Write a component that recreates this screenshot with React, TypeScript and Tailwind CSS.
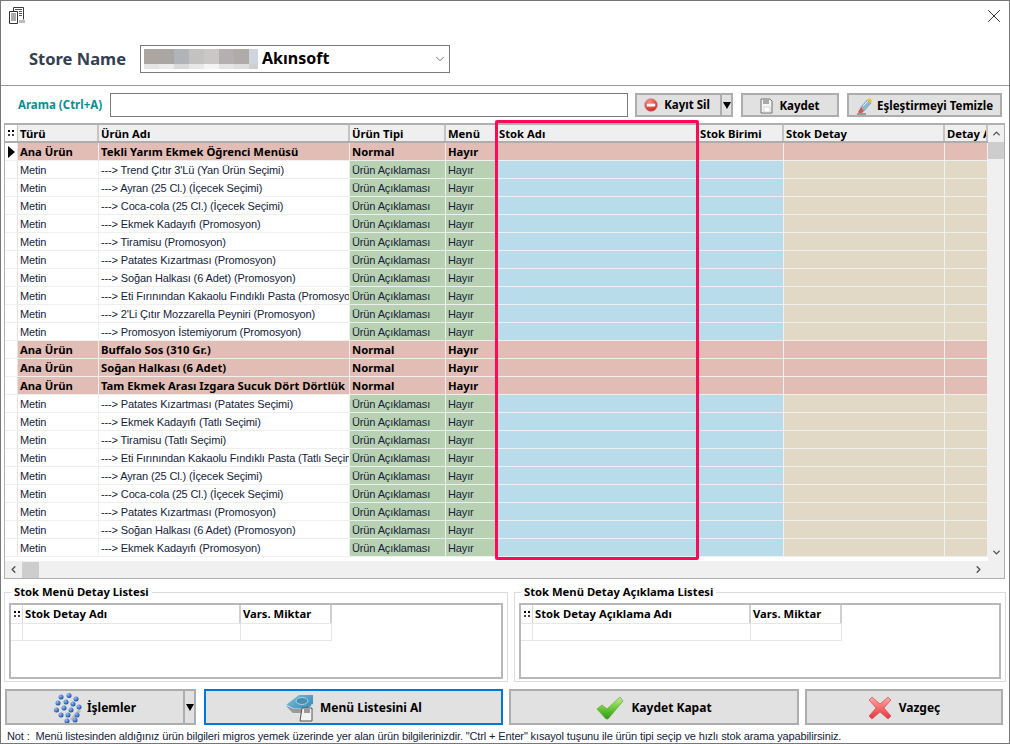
import { ChevronDown, ChevronLeft, ChevronRight, ChevronUp, X } from "lucide-react";

const FONT = "[font-family:'Noto_Sans','DejaVu_Sans',sans-serif]";
const REGULAR = "[font-family:'Liberation_Sans',sans-serif] text-[11px] tracking-[-0.13px] text-[#14233a]";

type Row = { type: string; name: string; kind: string; menu: string };

const main = (name: string): Row => ({ type: "Ana Ürün", name, kind: "Normal", menu: "Hayır" });
const sub = (name: string): Row => ({ type: "Metin", name: "---> " + name, kind: "Ürün Açıklaması", menu: "Hayır" });

const rows: Row[] = [
  main("Tekli Yarım Ekmek Öğrenci Menüsü"),
  sub("Trend Çıtır 3'Lü (Yan Ürün Seçimi)"),
  sub("Ayran (25 Cl.) (İçecek Seçimi)"),
  sub("Coca-cola (25 Cl.) (İçecek Seçimi)"),
  sub("Ekmek Kadayıfı (Promosyon)"),
  sub("Tiramisu (Promosyon)"),
  sub("Patates Kızartması (Promosyon)"),
  sub("Soğan Halkası (6 Adet) (Promosyon)"),
  sub("Eti Fırınından Kakaolu Fındıklı Pasta (Promosyon)"),
  sub("2'Li Çıtır Mozzarella Peyniri (Promosyon)"),
  sub("Promosyon İstemiyorum (Promosyon)"),
  main("Buffalo Sos (310 Gr.)"),
  main("Soğan Halkası (6 Adet)"),
  main("Tam Ekmek Arası Izgara Sucuk Dört Dörtlük"),
  sub("Patates Kızartması (Patates Seçimi)"),
  sub("Ekmek Kadayıfı (Tatlı Seçimi)"),
  sub("Tiramisu (Tatlı Seçimi)"),
  sub("Eti Fırınından Kakaolu Fındıklı Pasta (Tatlı Seçimi)"),
  sub("Ayran (25 Cl.) (İçecek Seçimi)"),
  sub("Coca-cola (25 Cl.) (İçecek Seçimi)"),
  sub("Patates Kızartması (Promosyon)"),
  sub("Soğan Halkası (6 Adet) (Promosyon)"),
  sub("Ekmek Kadayıfı (Promosyon)"),
];

const blur = [
  ["#aba6a2", "#e5e5e5", "w-[15px]"],
  ["#aaa6a3", "#ebebeb", "w-[15px]"],
  ["#b0b3b7", "#d9d9d9", "w-[15px]"],
  ["#c2c2c2", "#e8e8e8", "w-[15px]"],
  ["#c9c8c6", "#f4f4f4", "w-[15px]"],
  ["#b4b0b1", "#e4e4e4", "w-[15px]"],
  ["#b0aba8", "#dedede", "w-[15px]"],
  ["#ced5de", "#cfcfcf", "w-[9px]"],
];

const Grip = () => (
  <div className="grid h-[6px] w-[6px] grid-cols-2 gap-[2px]">
    <span className="h-[2px] w-[2px] bg-black" />
    <span className="h-[2px] w-[2px] bg-black" />
    <span className="h-[2px] w-[2px] bg-[#444]" />
    <span className="h-[2px] w-[2px] bg-[#444]" />
  </div>
);

const Head = ({ w, label }: { w: string; label: string }) => (
  <div className={`${w} flex h-full shrink-0 items-center overflow-hidden whitespace-nowrap border-r-2 border-[#c4c4c4] pl-[2px] pt-[2px] text-[11.25px] font-bold text-black`}>
    {label}
  </div>
);

const Cell = ({ w, bg, bold, text }: { w: string; bg: string; bold?: boolean; text?: string }) => (
  <div className={`${w} ${bg} ${bold ? "text-[11.25px] font-bold text-black" : REGULAR} flex h-full shrink-0 items-center overflow-hidden whitespace-nowrap border-r border-[#f0f0f0] pl-[2px] pt-[1px]`}>
    {text}
  </div>
);

const MainGrid = () => (
  <div className="relative ml-[3px] mt-[6px] flex h-[456px] w-[1001px] flex-col border border-t-2 border-[#b0b0b0] bg-white">
    <div className="flex min-h-0 flex-1">
      <div className="w-[983px] shrink-0">
        <div className="flex h-[18px] border-b-2 border-[#adadad] bg-[#efefef]">
          <div className="flex h-full w-[13px] shrink-0 items-center justify-center border-r border-[#c4c4c4] bg-white">
            <Grip />
          </div>
          <Head w="w-[81px]" label="Türü" />
          <Head w="w-[251px]" label="Ürün Adı" />
          <Head w="w-[96px]" label="Ürün Tipi" />
          <Head w="w-[51px]" label="Menü" />
          <Head w="w-[201px]" label="Stok Adı" />
          <Head w="w-[86px]" label="Stok Birimi" />
          <Head w="w-[161px]" label="Stok Detay" />
          <Head w="w-[43px]" label="Detay Açıklama" />
        </div>
        {rows.map((r, i) => {
          const isMain = r.type === "Ana Ürün";
          return (
            <div key={i} className="flex h-[18px] border-b border-[#efefef]">
              <div className="flex h-full w-[13px] shrink-0 items-center justify-center border-r border-[#e4e4e4] bg-white">
                {i === 0 && <div className="h-0 w-0 border-y-[6px] border-l-[7px] border-y-transparent border-l-black" />}
              </div>
              <Cell w="w-[81px]" bg={isMain ? "bg-[#e2bdb5]" : "bg-white"} bold={isMain} text={r.type} />
              <Cell w="w-[251px]" bg={isMain ? "bg-[#e2bdb5]" : "bg-white"} bold={isMain} text={r.name} />
              <Cell w="w-[96px]" bg={isMain ? "bg-[#e2bdb5]" : "bg-[#b9d1b3]"} bold={isMain} text={r.kind} />
              <Cell w="w-[51px]" bg={isMain ? "bg-[#e2bdb5]" : "bg-[#b9d1b3]"} bold={isMain} text={r.menu} />
              <div className={`${isMain ? "bg-[#e2bdb5]" : "bg-[#b8dcea]"} h-full w-[287px] shrink-0 border-r border-[#f0f0f0]`} />
              <Cell w="w-[161px]" bg={isMain ? "bg-[#e2bdb5]" : "bg-[#e1d8c5]"} />
              <Cell w="w-[43px]" bg={isMain ? "bg-[#e2bdb5]" : "bg-[#e1d8c5]"} />
            </div>
          );
        })}
      </div>
      <div className="flex w-[16px] shrink-0 flex-col items-center bg-[#f0f0f0]">
        <div className="flex h-[17px] items-center justify-center">
          <ChevronUp size={11} strokeWidth={3} color="#505050" />
        </div>
        <div className="h-[17px] w-[16px] bg-[#cdcdcd]" />
        <div className="flex-1" />
        <div className="flex h-[17px] items-center justify-center">
          <ChevronDown size={11} strokeWidth={3} color="#505050" />
        </div>
      </div>
    </div>
    <div className="flex h-[17px] shrink-0 items-center bg-[#f0f0f0] pr-[17px]">
      <div className="flex h-full w-[17px] items-center justify-center">
        <ChevronLeft size={11} strokeWidth={3} color="#505050" />
      </div>
      <div className="h-[16px] w-[17px] bg-[#cdcdcd]" />
      <div className="flex-1" />
      <div className="flex h-full w-[17px] items-center justify-center">
        <ChevronRight size={11} strokeWidth={3} color="#505050" />
      </div>
    </div>
    <div className="absolute left-[490px] top-[-5px] h-[440px] w-[204px] rounded-[2px] border-[3.5px] border-[#ff0a5a]" />
  </div>
);

const DetailBox = ({ title, head, className }: { title: string; head: string; className: string }) => (
  <fieldset className={`${className} h-[97px] border border-[#dcdcdc] pl-[4px]`}>
    <legend className="ml-[2px] px-[3px] text-[11.25px] font-bold leading-[14px] text-black">{title}</legend>
    <div className="mt-[4px] h-[76px] w-[calc(100%-4px)] border-2 border-[#b8b8b8]">
      <div className="flex h-[18px] w-[321px]">
        <div className="flex w-[12px] items-center justify-center border-r border-[#d8d8d8]">
          <Grip />
        </div>
        <div className="flex w-[218px] items-center border-r-2 border-[#d0d0d0] pl-[2px] text-[11.25px] font-bold text-black">{head}</div>
        <div className="flex w-[91px] items-center border-r-2 border-[#d0d0d0] pl-[2px] text-[11.25px] font-bold text-black">Vars. Miktar</div>
      </div>
      <div className="flex h-[18px] w-[321px] border-y border-[#e6e6e6]">
        <div className="w-[12px] border-r border-[#e6e6e6]" />
        <div className="w-[218px] border-r border-[#e6e6e6]" />
        <div className="w-[91px] border-r border-[#e6e6e6]" />
      </div>
    </div>
  </fieldset>
);

const SplitArrow = () => <div className="h-0 w-0 border-x-[4px] border-t-[7px] border-x-transparent border-t-black" />;

const StopIcon = () => (
  <svg width="14" height="14" viewBox="0 0 14 14">
    <defs>
      <radialGradient id="st" cx="0.4" cy="0.25" r="0.9">
        <stop offset="0" stopColor="#ff8a7c" />
        <stop offset="1" stopColor="#c0151a" />
      </radialGradient>
    </defs>
    <circle cx="7" cy="7" r="6.5" fill="url(#st)" stroke="#b9b0b0" strokeWidth="0.6" />
    <rect x="2.8" y="5.7" width="8.4" height="2.8" fill="#fff" />
  </svg>
);

const SaveIcon = () => (
  <svg width="13" height="16" viewBox="0 0 13 16">
    <path d="M1 1h9l2 2v12H1z" fill="#f4f4f4" stroke="#6f6f6f" />
    <rect x="3" y="1" width="6" height="5" fill="#a9a9a9" />
    <rect x="4" y="9" width="6" height="5" fill="#fff" stroke="#bdbdbd" strokeWidth="0.6" />
  </svg>
);

const EraserIcon = () => (
  <svg width="18" height="18" viewBox="0 0 18 18">
    <path d="M1 17h9" stroke="#555" strokeWidth="1" />
    <path d="M2 15L5 10l3 4-2 2H3z" fill="#d45a52" />
    <path d="M5 10l6-7 4 3-7 8z" fill="#8fb9d6" stroke="#5d7f97" strokeWidth="0.5" />
    <path d="M11 3l3-2 2 3-1 2z" fill="#e8c62c" />
    <path d="M7 9l5-5" stroke="#eef5f9" strokeWidth="1" />
  </svg>
);

const DotsIcon = () => {
  const dots = [
    [6, 2], [14, 0.5], [21, 4], [3, 8], [11, 7], [18, 9], [1.5, 15], [9, 13], [16, 15], [24, 12], [6, 20], [13, 20], [22, 20], [12, 26], [20, 25],
  ];
  return (
    <svg width="28" height="30" viewBox="0 0 28 30">
      <defs>
        <radialGradient id="dt" cx="0.35" cy="0.3" r="0.8">
          <stop offset="0" stopColor="#8fc2f2" />
          <stop offset="1" stopColor="#123f9c" />
        </radialGradient>
      </defs>
      <path d="M17 27l9-10" stroke="#bdbdbd" strokeWidth="3" />
      {dots.map(([x, y], i) => (
        <circle key={i} cx={x + 1} cy={y + 2} r="2.5" fill="url(#dt)" />
      ))}
    </svg>
  );
};

const DriveIcon = () => (
  <svg width="30" height="28" viewBox="0 0 30 28">
    <defs>
      <linearGradient id="dr" x1="0" y1="0" x2="1" y2="1">
        <stop offset="0" stopColor="#7ec4dc" />
        <stop offset="1" stopColor="#2a7fae" />
      </linearGradient>
    </defs>
    <path d="M1 11L14 1h14v9L17 19H8z" fill="url(#dr)" />
    <path d="M1 11l8 4h18v-5" fill="none" stroke="#d8e6ec" strokeWidth="1" />
    <path d="M1 12l7 7h9v-4H9z" fill="#9a9a9a" />
    <ellipse cx="17" cy="7" rx="6" ry="3.5" fill="#4c8fb2" stroke="#a7d1e2" strokeWidth="1" />
    <path d="M17 14h10v13H15z" fill="#f2f2f2" stroke="#555" strokeWidth="1" />
    <rect x="19" y="15" width="6" height="4" fill="#9a9a9a" />
  </svg>
);

const CheckIcon = () => (
  <svg width="28" height="24" viewBox="0 0 28 24">
    <defs>
      <linearGradient id="ck" x1="0" y1="0" x2="0" y2="1">
        <stop offset="0" stopColor="#c4f08c" />
        <stop offset="0.5" stopColor="#6cc93a" />
        <stop offset="1" stopColor="#2f9a1c" />
      </linearGradient>
    </defs>
    <path d="M1 13l5-4 5 4L24 1l3 4-15 18h-2z" fill="url(#ck)" stroke="#5aa835" strokeWidth="0.7" />
  </svg>
);

const CrossIcon = () => (
  <svg width="24" height="24" viewBox="0 0 24 24">
    <defs>
      <linearGradient id="cr" x1="0" y1="0" x2="0" y2="1">
        <stop offset="0" stopColor="#ffa6a0" />
        <stop offset="1" stopColor="#e8333a" />
      </linearGradient>
    </defs>
    <path d="M4 1l8 7 8-7 3 3-7 8 7 8-3 3-8-7-8 7-3-3 7-8-7-8z" fill="url(#cr)" stroke="#d0555a" strokeWidth="0.7" />
  </svg>
);

const DocIcon = () => (
  <svg width="16" height="17" viewBox="0 0 16 17">
    <path d="M4.5 4V.5h10v12" fill="none" stroke="#3a3a3a" />
    <path d="M.5 4.5h8v12h-8z" fill="#fff" stroke="#333" />
    <path d="M6 2.5h7M10 4.5h3M10 6.5h3M10 8.5h3M2 7h5M2 9h5M2 11h5M2 13h5" stroke="#555" />
    <rect x="10" y="13" width="6" height="3" fill="#bbb" />
  </svg>
);

const BTN = "flex items-center justify-center border-2 bg-[#e1e1e1] font-bold text-black";

export default function App() {
  return (
    <div className={`${FONT} h-[744px] w-[1010px] overflow-hidden border border-[#777] bg-white`}>
      <div className="relative h-[85px] border-b border-[#999]">
        <div className="flex h-[44px] justify-between pl-[8px] pr-[4px] pt-[6px]">
          <DocIcon />
          <X size={22} strokeWidth={1} color="#222" className="-mt-[2px]" />
        </div>
        <div className="flex items-center pl-[28px]">
          <div className="w-[111px] pt-[1px] text-[16.5px] font-bold text-[#33404f]">Store Name</div>
          <div className="flex h-[28px] w-[310px] items-center border-[1.5px] border-[#7a7a7a] pl-[3px] pr-[2px]">
            <div className="flex h-[20px]">
              {blur.map(([a, b, w], i) => (
                <div key={i} className={`${w} flex flex-col`}>
                  <div className="h-[15px]" style={{ background: a }} />
                  <div className="h-[5px]" style={{ background: b }} />
                </div>
              ))}
            </div>
            <div className="ml-[4px] flex-1 pb-[2px] text-[16px] font-bold text-black">Akınsoft</div>
            <ChevronDown size={14} strokeWidth={1.3} color="#444" />
          </div>
        </div>
      </div>

      <div className="mt-[7px] flex h-[24px] items-center pl-[17px]">
        <div className="w-[92px] pb-[1px] text-[11.5px] font-bold text-[#0a8f8f]">Arama (Ctrl+A)</div>
        <div className="h-[24px] w-[518px] border-[1.5px] border-[#7a7a7a]" />
        <div className="ml-[7px] flex h-[24px] w-[98px] text-[11.5px]">
          <div className={`${BTN} w-[85px] gap-[6px] border-r-0 border-[#adadad] pr-[3px]`}>
            <StopIcon />
            Kayıt Sil
          </div>
          <div className={`${BTN} w-[13px] border-[#adadad]`}>
            <SplitArrow />
          </div>
        </div>
        <div className={`${BTN} ml-[8px] h-[24px] w-[98px] gap-[6px] border-[#adadad] pt-[1px] text-[11.5px]`}>
          <SaveIcon />
          Kaydet
        </div>
        <div className={`${BTN} ml-[8px] h-[24px] w-[155px] gap-[3px] border-[#adadad] pt-[1px] text-[11.5px]`}>
          <EraserIcon />
          Eşleştirmeyi Temizle
        </div>
      </div>

      <MainGrid />

      <div className="mt-[6px] flex pl-[3px]">
        <DetailBox className="w-[504px]" title="Stok Menü Detay Listesi" head="Stok Detay Adı" />
        <DetailBox className="ml-[6px] w-[492px]" title="Stok Menü Detay Açıklama Listesi" head="Stok Detay Açıklama Adı" />
      </div>

      <div className="mt-[7px] flex h-[36px] pl-[4px] text-[12px]">
        <div className={`${BTN} w-[178px] gap-[5px] border-r-0 border-[#adadad] pt-[1px]`}>
          <DotsIcon />
          İşlemler
        </div>
        <div className={`${BTN} w-[13px] border-[#adadad]`}>
          <SplitArrow />
        </div>
        <div className={`${BTN} ml-[8px] w-[299px] gap-[5px] border-[#0078d7] pt-[1px]`}>
          <DriveIcon />
          Menü Listesini Al
        </div>
        <div className={`${BTN} ml-[6px] w-[290px] gap-[7px] border-[#adadad] pt-[1px]`}>
          <CheckIcon />
          Kaydet Kapat
        </div>
        <div className={`${BTN} ml-[6px] w-[198px] gap-[7px] border-[#adadad] pt-[1px]`}>
          <CrossIcon />
          Vazgeç
        </div>
      </div>

      <div className={`${REGULAR} mt-[3px] whitespace-pre pl-[6px] leading-[17px]`}>
        {'Not :  Menü listesinden aldığınız ürün bilgileri migros yemek üzerinde yer alan ürün bilgilerinizdir. "Ctrl + Enter" kısayol tuşunu ile ürün tipi seçip ve hızlı stok arama yapabilirsiniz.'}
      </div>
    </div>
  );
}
